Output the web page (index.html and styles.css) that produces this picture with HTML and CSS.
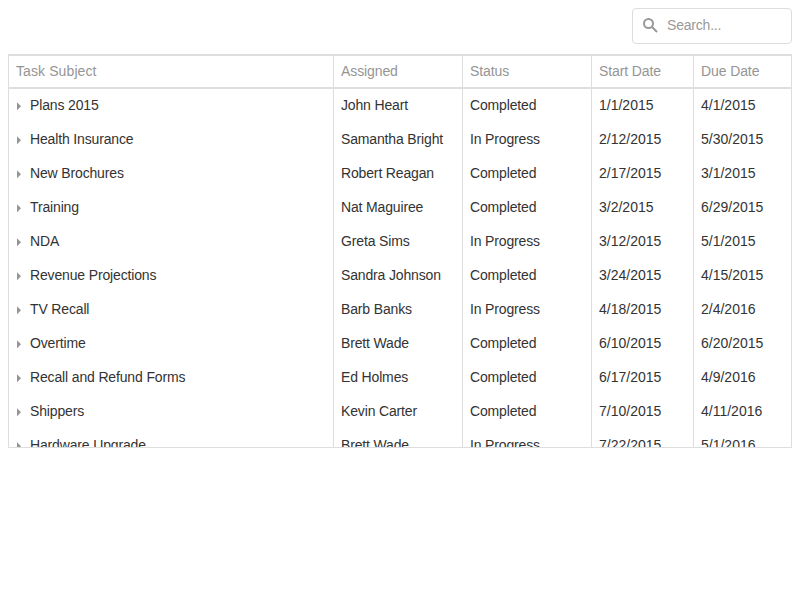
FILE: index.html
```html
<!DOCTYPE html>
<html lang="en">
<head>
<meta charset="utf-8">
<title>Tasks</title>
<link rel="stylesheet" href="styles.css">
</head>
<body>
<div class="toolbar">
  <label class="search">
    <svg class="search-icon" viewBox="0 0 16 16"><circle cx="5.5" cy="5.5" r="4.5" /><path d="M8.8 8.8l5.2 5.2" /></svg>
    <input class="search-input" type="text" placeholder="Search...">
  </label>
</div>
<div class="grid">
  <div class="row header"><div class="title">Task Subject</div><div>Assigned</div><div>Status</div><div>Start Date</div><div>Due Date</div></div>
  <div class="rows" id="rows"></div>
</div>
<script src="script.js"></script>
</body>
</html>
```
FILE: styles.css
```css
* { box-sizing: border-box; }
body {
  margin: 8px;
  background: #fff;
  color: #333;
  font: 14px/19px "Helvetica Neue", "Nimbus Sans", "Liberation Sans", sans-serif;
}
.toolbar { display: flex; justify-content: flex-end; height: 46px; }
.search {
  display: flex;
  align-items: center;
  width: 160px;
  height: 36px;
  padding-left: 10px;
  border: 1px solid #ddd;
  border-radius: 4px;
}
.search-icon {
  flex: none;
  width: 16px;
  height: 16px;
  margin-right: 8px;
  fill: none;
  stroke: #999;
  stroke-width: 2;
}
.search-input {
  width: 110px;
  padding: 0 0 2px;
  border: 0;
  outline: 0;
  font: inherit;
  letter-spacing: -0.2px;
}
.search-input::placeholder { color: #999; }
.grid {
  display: flex;
  flex-direction: column;
  height: 394px;
  border: 1px solid #ddd;
  border-top-width: 2px;
  overflow: hidden;
}
.row { display: grid; grid-template-columns: 325px 129px 129px 102px 1fr; height: 34px; flex: none; }
.row > div { padding: 7px; border-right: 1px solid #ddd; white-space: nowrap; letter-spacing: -0.15px; }
.row > div:last-child { border-right: 0; }
.row > div:nth-child(n+4) { letter-spacing: 0; }
.header { height: 33px; color: #959595; border-bottom: 2px solid #ddd; }
.row.header > div { padding-top: 6px; letter-spacing: -0.1px; }
.row.header > .title { letter-spacing: 0.1px; }
.subject { display: flex; }
.arrow { width: 4px; height: 8px; margin: 6px 9px 0 1px; fill: #959595; }
```
FILE: script.js
```js
const tasks = [
  ["Plans 2015", "John Heart", "Completed", "1/1/2015", "4/1/2015"],
  ["Health Insurance", "Samantha Bright", "In Progress", "2/12/2015", "5/30/2015"],
  ["New Brochures", "Robert Reagan", "Completed", "2/17/2015", "3/1/2015"],
  ["Training", "Nat Maguiree", "Completed", "3/2/2015", "6/29/2015"],
  ["NDA", "Greta Sims", "In Progress", "3/12/2015", "5/1/2015"],
  ["Revenue Projections", "Sandra Johnson", "Completed", "3/24/2015", "4/15/2015"],
  ["TV Recall", "Barb Banks", "In Progress", "4/18/2015", "2/4/2016"],
  ["Overtime", "Brett Wade", "Completed", "6/10/2015", "6/20/2015"],
  ["Recall and Refund Forms", "Ed Holmes", "Completed", "6/17/2015", "4/9/2016"],
  ["Shippers", "Kevin Carter", "Completed", "7/10/2015", "4/11/2016"],
  ["Hardware Upgrade", "Brett Wade", "In Progress", "7/22/2015", "5/1/2016"]
];
const arrow = '<svg class="arrow" viewBox="0 0 4 8"><path d="M0 0.3l4 4-4 4z"/></svg>';
document.getElementById("rows").innerHTML = tasks.map(([subject, ...rest]) =>
  `<div class="row"><div class="subject">${arrow}<span>${subject}</span></div>${rest.map(v => `<div>${v}</div>`).join("")}</div>`
).join("");
```
